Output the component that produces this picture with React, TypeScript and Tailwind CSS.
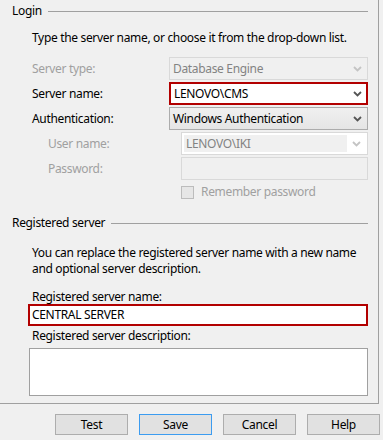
import React from "react"

const font = { fontFamily: '"Noto Sans", "Open Sans", sans-serif' }

function Chevron({ color }: { color: string }) {
  return (
    <svg width="9" height="6" viewBox="0 0 9 6" className="shrink-0">
      <polyline points="1,1 4.5,4.5 8,1" fill="none" stroke={color} strokeWidth="1.8" />
    </svg>
  )
}

function GroupTitle({ title }: { title: string }) {
  return (
    <div className="flex h-[22px] items-center pl-[12px] pr-[10px]">
      <span className="text-black">{title}</span>
      <div className="ml-[6px] h-px flex-1 bg-[#a0a0a0]" />
    </div>
  )
}

function Label({ children, disabled, indent }: { children: React.ReactNode; disabled?: boolean; indent?: boolean }) {
  return (
    <div className={`flex items-center ${indent ? "pl-[16px]" : ""} ${disabled ? "text-[#a0a0a0]" : "text-black"}`}>
      {children}
    </div>
  )
}

function DialogButton({ label, focused }: { label: string; focused?: boolean }) {
  return (
    <button
      className={`flex h-[21px] w-[73px] items-center justify-center border bg-[#e1e1e1] text-black ${
        focused ? "border-[#3c9cf0]" : "border-[#adadad]"
      }`}
    >
      {label}
    </button>
  )
}

export default function App() {
  return (
    <div
      className="h-[440px] w-[383px] overflow-hidden whitespace-nowrap bg-[#f0f0f0] text-[12px] leading-[16px] tracking-[-0.33px]"
      style={font}
    >
      <div className="h-[404px] w-[379px] border-b border-r border-[#a0a0a0]">
        <GroupTitle title="Login" />

        <div className="pl-[32px] pr-[10px]">
          <p className="mt-[8px] text-black">Type the server name, or choose it from the drop-down list.</p>

          <div className="mt-[11px] grid grid-cols-[137px_1fr] gap-y-[2px]">
            <Label disabled>Server type:</Label>
            <div className="flex h-[23px] items-center justify-between border border-[#d9d9d9] bg-[#f0f0f0] pl-[3px] pr-[5px] text-[#838383]">
              <span>Database Engine</span>
              <Chevron color="#c4c4c4" />
            </div>

            <Label>Server name:</Label>
            <div className="flex h-[23px] items-center justify-between border-2 border-[#b20000] bg-white pl-[3px] pr-[4px] text-black">
              <span>LENOVO\CMS</span>
              <Chevron color="#555555" />
            </div>

            <Label>Authentication:</Label>
            <div className="flex h-[23px] items-center justify-between border border-[#acacac] bg-gradient-to-b from-[#f0f0f0] to-[#e5e5e5] pl-[3px] pr-[5px] text-black">
              <span>Windows Authentication</span>
              <Chevron color="#555555" />
            </div>
          </div>

          <div className="mt-[2px] grid grid-cols-[149px_1fr] gap-y-[2px]">
            <Label disabled indent>User name:</Label>
            <div className="flex h-[23px] items-stretch border border-[#d9d9d9] bg-white p-[2px]">
              <div className="flex flex-1 items-center bg-[#f0f0f0] pl-[2px] text-[#838383]">LENOVO\IKI</div>
              <div className="flex w-[18px] items-center justify-center">
                <Chevron color="#c4c4c4" />
              </div>
            </div>

            <Label disabled indent>Password:</Label>
            <div className="h-[23px] border border-[#d9d9d9] bg-[#f0f0f0]" />

            <div />
            <div className="mt-[2px] flex items-center gap-[7px] text-[#a0a0a0]">
              <div className="h-[13px] w-[13px] border border-[#bcbcbc] bg-[#e6e6e6]" />
              <span>Remember password</span>
            </div>
          </div>
        </div>

        <div className="mt-[12px]">
          <GroupTitle title="Registered server" />
        </div>

        <div className="pl-[28px] pr-[10px]">
          <p className="mt-[11px] pl-[4px] text-black">
            You can replace the registered server name with a new name
            <br />
            and optional server description.
          </p>

          <p className="mt-[12px] pl-[4px] text-black">Registered server name:</p>
          <div className="-mt-[1px] flex h-[22px] items-center border-2 border-[#b20000] bg-white pl-[2px] text-black">
            CENTRAL SERVER
          </div>

          <p className="mt-[2px] pl-[4px] text-black">Registered server description:</p>
          <div className="ml-[1px] mt-[4px] h-[48px] border border-[#a0a0a0] bg-white" />
        </div>
      </div>

      <div className="mt-[10px] flex justify-end gap-[11px] pr-[3px]">
        <DialogButton label="Test" />
        <DialogButton label="Save" focused />
        <DialogButton label="Cancel" />
        <DialogButton label="Help" />
      </div>
    </div>
  )
}
